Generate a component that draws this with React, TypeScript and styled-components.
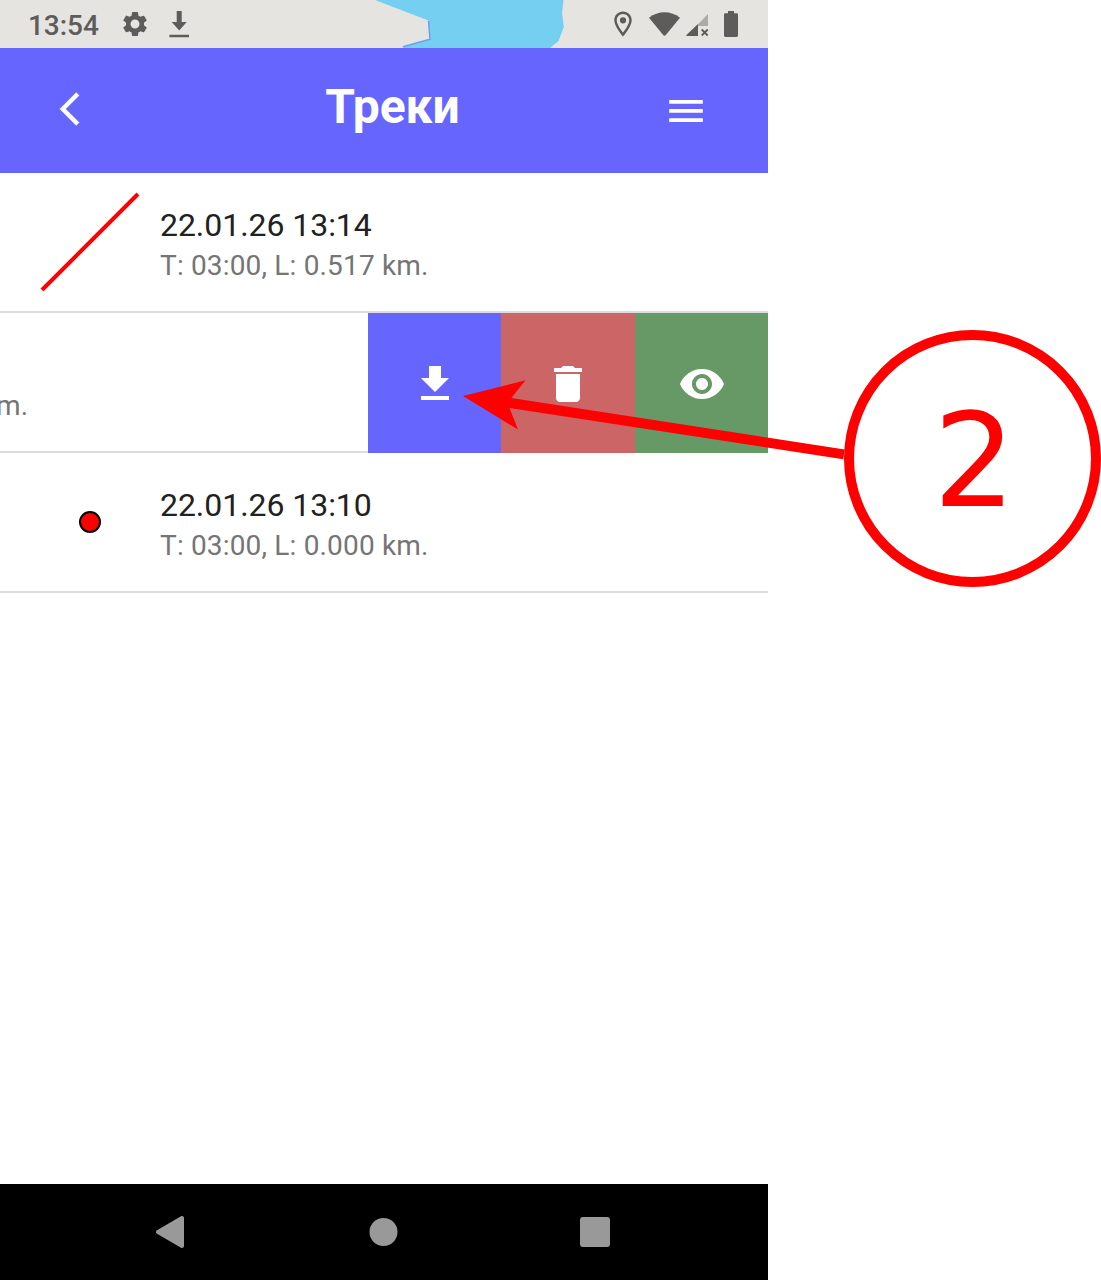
import React from 'react';
import styled, { createGlobalStyle } from 'styled-components';

const GlobalStyle = createGlobalStyle`
  * { box-sizing: border-box; }
  body { margin: 0; background: #fff; font-family: Roboto, "Noto Sans", sans-serif; }
  svg { display: block; flex: none; }
`;

const Page = styled.div`
  position: relative;
  display: flex;
  width: 1101px;
  height: 1280px;
  overflow: hidden;
`;

const Phone = styled.main`
  display: flex;
  flex-direction: column;
  width: 768px;
  height: 1280px;
`;

const StatusBar = styled.div`
  position: relative;
  display: flex;
  align-items: center;
  height: 48px;
  padding: 0 29px 0 28px;
  background: #e5e4e0;
  color: #5d5c5a;
`;

const MapStrip = styled.svg`
  position: absolute;
  left: 0;
  top: 0;
`;

const Clock = styled.span`
  width: 92px;
  padding-top: 3px;
  font-size: 28px;
  font-weight: 500;
  letter-spacing: -0.05px;
  line-height: 48px;
`;

const StatusIcons = styled.div<{ $gap: number; $end?: boolean }>`
  display: flex;
  align-items: center;
  gap: ${(p) => p.$gap}px;
  margin-left: ${(p) => (p.$end ? 'auto' : '0')};
`;

const Header = styled.header`
  display: flex;
  justify-content: space-between;
  align-items: flex-start;
  height: 125px;
  padding: 41px 60px 0 50px;
  background: #6666ff;
  color: #fff;
`;

const Title = styled.h1`
  margin: -10px 0 0 32px;
  font-size: 48px;
  font-weight: 700;
  line-height: 56px;
`;

const List = styled.section`
  display: flex;
  flex-direction: column;
  flex: 1;
`;

const Row = styled.article`
  display: flex;
  height: 140px;
  overflow: hidden;
`;

const RowContent = styled.div`
  display: flex;
  flex: 1;
  border-bottom: 2px solid #ddd;
`;

const Thumb = styled.div`
  width: 160px;
  padding: 19px 0 0 40px;
`;

const Info = styled.div<{ $shift?: number }>`
  display: flex;
  flex-direction: column;
  padding-top: 32px;
  margin-left: ${(p) => p.$shift ?? 0}px;
`;

const Name = styled.div`
  height: 41px;
  color: #212121;
  font-size: 32px;
  letter-spacing: -0.05px;
  line-height: 40px;
  white-space: nowrap;
`;

const Details = styled.div`
  height: 40px;
  color: #757575;
  font-size: 28px;
  letter-spacing: 0.17px;
  line-height: 40px;
  white-space: nowrap;
`;

const Actions = styled.div`
  display: grid;
  grid-template-columns: 133px 134px 133px;
  width: 400px;
`;

const Action = styled.button<{ $color: string }>`
  display: flex;
  justify-content: center;
  padding: 47px 0 0;
  border: 0;
  background: ${(p) => p.$color};
  color: #fff;
`;

const NavBar = styled.nav`
  display: flex;
  align-items: center;
  height: 96px;
  padding: 0 158px 0 155px;
  justify-content: space-between;
  background: #000;
  color: #999;
`;

const Callout = styled.aside`
  display: flex;
  justify-content: center;
  width: 257px;
  height: 257px;
  margin: 330px 0 0 76px;
  border: 10px solid #f00;
  border-radius: 50%;
  color: #f00;
  font-family: "DejaVu Sans", sans-serif;
  font-size: 129.5px;
  line-height: 244px;
  text-indent: 4px;
`;

const Arrow = styled.svg`
  position: absolute;
  left: 460px;
  top: 376px;
`;

function MaterialIcon({ d, size, stroke = 0 }: { d: string; size: number; stroke?: number }) {
  return (
    <svg width={size} height={size} viewBox="0 0 24 24" fill="currentColor" stroke="currentColor" strokeWidth={stroke}>
      <path d={d} />
    </svg>
  );
}

const paths = {
  gear: 'M19.14 12.94c.04-.3.06-.61.06-.94 0-.32-.02-.64-.07-.94l2.03-1.58c.18-.14.23-.41.12-.61l-1.92-3.32c-.12-.22-.37-.29-.59-.22l-2.39.96c-.5-.38-1.03-.7-1.62-.94l-.36-2.54c-.04-.24-.24-.41-.48-.41h-3.84c-.24 0-.43.17-.47.41l-.36 2.54c-.59.24-1.13.57-1.62.94l-2.39-.96c-.22-.08-.47 0-.59.22L2.74 8.87c-.12.21-.08.47.12.61l2.03 1.58c-.05.3-.09.63-.09.94s.02.64.07.94l-2.03 1.58c-.18.14-.23.41-.12.61l1.92 3.32c.12.22.37.29.59.22l2.39-.96c.5.38 1.03.7 1.62.94l.36 2.54c.05.24.24.41.48.41h3.84c.24 0 .44-.17.47-.41l.36-2.54c.59-.24 1.13-.56 1.62-.94l2.39.96c.22.08.47 0 .59-.22l1.92-3.32c.12-.22.07-.47-.12-.61l-2.01-1.58zM12 15.6c-1.98 0-3.6-1.62-3.6-3.6s1.62-3.6 3.6-3.6 3.6 1.62 3.6 3.6-1.62 3.6-3.6 3.6z',
  pin: 'M12 2C8.13 2 5 5.13 5 9c0 5.25 7 13 7 13s7-7.75 7-13c0-3.87-3.13-7-7-7zM7 9c0-2.76 2.24-5 5-5s5 2.24 5 5c0 2.88-2.88 7.19-5 9.88C9.92 16.21 7 11.85 7 9zM12 6.5a2.5 2.5 0 1 0 0 5 2.5 2.5 0 0 0 0-5z',
  back: 'M17.51 3.87L15.73 2.1 5.84 12l9.9 9.9 1.77-1.77L9.38 12l8.13-8.13z',
  download: 'M19 9h-4V3H9v6H5l7 7 7-7zM5 18v2h14v-2H5z',
  trash: 'M6 19c0 1.1.9 2 2 2h8c1.1 0 2-.9 2-2V7H6v12zM19 4h-3.5l-1-1h-5l-1 1H5v2h14V4z',
  eye: 'M12 4.5C7 4.5 2.73 7.61 1 12c1.73 4.39 6 7.5 11 7.5s9.27-3.11 11-7.5c-1.73-4.39-6-7.5-11-7.5zM12 17c-2.76 0-5-2.24-5-5s2.24-5 5-5 5 2.24 5 5-2.24 5-5 5zm0-8c-1.66 0-3 1.34-3 3s1.34 3 3 3 3-1.34 3-3-1.34-3-3-3z',
};

export default function App() {
  return (
    <Page>
      <GlobalStyle />
      <Phone>
        <StatusBar>
          <MapStrip width="768" height="48" viewBox="0 0 768 48">
            <path d="M375 0 428.5 20.5 430.5 39 403 47 404 48H550L558.500 41 563.800 27 562 13 563.500 0Z" fill="#75cff0" />
            <path d="M428.500 21 430 39.200 403 46.700" fill="none" stroke="#6c9eef" strokeWidth="1.5" />
          </MapStrip>
          <Clock>13:54</Clock>
          <StatusIcons $gap={19}>
            <MaterialIcon d={paths.gear} size={30} />
            <svg width="21" height="28" viewBox="0 0 21 28" fill="currentColor">
              <path d="M7.700 1h5v11h5l-7.500 8.500L2.700 12h5zM.4 24.800h19.600v2.400H.4z" />
            </svg>
          </StatusIcons>
          <StatusIcons $gap={0} $end>
            <MaterialIcon d={paths.pin} size={30} />
            <svg width="101" height="28" viewBox="638 10 101 28" fill="currentColor">
              <path d="M649 17.800C658 10.400 671 10.400 680 17.800L666 34.800Q664.500 36.500 663 34.800Z" />
              <path d="M708 14V26H698V24.300Z" opacity=".42" />
              <path d="M698 24V36H687Q685.500 36 686.700 34.700Z" />
              <path d="m701.700 29.500 6 6m0-6-6 6" stroke="currentColor" strokeWidth="1.800" />
              <path d="M728 11h6v2.300h2.700q1.300 0 1.300 1.300v21q0 1.400-1.300 1.400h-11.400q-1.300 0-1.300-1.400v-21q0-1.300 1.300-1.300h2.700z" />
            </svg>
          </StatusIcons>
        </StatusBar>
        <Header>
          <MaterialIcon d={paths.back} size={40} stroke={0.15} />
          <Title>Треки</Title>
          <svg width="45" height="45" viewBox="0 0 45 45" fill="currentColor">
            <path d="M6.200 11h33.600v3.700H6.200zM6.200 20.100h33.600v3.700H6.200zM6.200 29.300h33.600V33H6.200z" />
          </svg>
        </Header>
        <List>
          <Row>
            <RowContent>
              <Thumb>
                <svg width="100" height="100" viewBox="0 0 100 100">
                  <path d="M2 98 98 2" stroke="#f00" strokeWidth="4" />
                </svg>
              </Thumb>
              <Info>
                <Name>22.01.26 13:14</Name>
                <Details>T: 03:00, L: 0.517 km.</Details>
              </Info>
            </RowContent>
          </Row>
          <Row>
            <RowContent>
              <Info $shift={-4}>
                <Name />
                <Details>m.</Details>
              </Info>
            </RowContent>
            <Actions>
              <Action $color="#6666ff"><MaterialIcon d={paths.download} size={48} /></Action>
              <Action $color="#cc6666"><MaterialIcon d={paths.trash} size={48} /></Action>
              <Action $color="#669966"><MaterialIcon d={paths.eye} size={48} /></Action>
            </Actions>
          </Row>
          <Row>
            <RowContent>
              <Thumb>
                <svg width="100" height="100" viewBox="0 0 100 100">
                  <circle cx="50" cy="50" r="10" fill="#f00" stroke="#000" strokeWidth="2" />
                </svg>
              </Thumb>
              <Info>
                <Name>22.01.26 13:10</Name>
                <Details>T: 03:00, L: 0.000 km.</Details>
              </Info>
            </RowContent>
          </Row>
        </List>
        <NavBar>
          <svg width="30" height="34" viewBox="0 0 30 34">
            <path d="M3 17 27 3V31Z" fill="currentColor" stroke="currentColor" strokeWidth="4" strokeLinejoin="round" />
          </svg>
          <svg width="31" height="28" viewBox="0 0 31 28">
            <circle cx="16.500" cy="14" r="14" fill="currentColor" />
          </svg>
          <svg width="30" height="30" viewBox="0 0 30 30">
            <rect width="30" height="30" rx="3" fill="currentColor" />
          </svg>
        </NavBar>
      </Phone>
      <Callout>2</Callout>
      <Arrow width="390" height="90" viewBox="460 376 390 90">
        <path d="M463 396 525.600 380.200 511.300 397.900 844.800 449.500 843.200 459.300 509.500 408 518 429.500Z" fill="#f00" />
      </Arrow>
    </Page>
  );
}
